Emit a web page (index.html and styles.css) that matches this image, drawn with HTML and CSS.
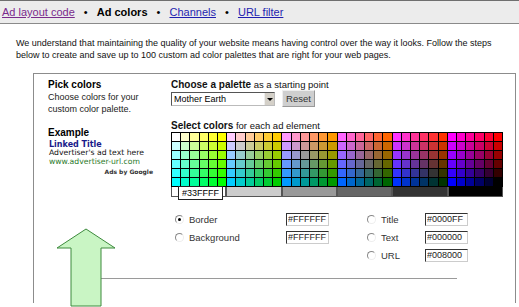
FILE: index.html
```html
<!DOCTYPE html>
<html lang="en">
<head>
    <meta charset="UTF-8">
    <title>Ad colors</title>
    <link rel="stylesheet" href="styles.css">
</head>
<body>
    <div class="tabs">
        <a class="visited" href="#">Ad layout code</a>
        <span class="dot">•</span>
        <b>Ad colors</b>
        <span class="dot">•</span>
        <a href="#">Channels</a>
        <span class="dot">•</span>
        <a href="#">URL filter</a>
    </div>

    <p class="intro">We understand that maintaining the quality of your website means having control over the way it looks. Follow the steps<br>below to create and save up to 100 custom ad color palettes that are right for your web pages.</p>

    <div class="panel">
        <div class="panel-row">
            <!-- Left column -->
            <div class="side">
                <h4>Pick colors</h4>
                <p>Choose colors for your<br>custom color palette.</p>
                <h4 class="example-head">Example</h4>
                <div class="sample">
                    <div class="ad-title">Linked Title</div>
                    <div class="ad-text">Advertiser's ad text here</div>
                    <div class="ad-url">www.advertiser-url.com</div>
                    <div class="ad-by">Ads by Google</div>
                </div>
            </div>

            <!-- Palette and picker -->
            <div class="main">
                <div class="label"><b>Choose a palette</b> as a starting point</div>
                <div class="palette-row">
                    <div class="select">Mother Earth<span class="select-btn"><span class="caret"></span></span></div>
                    <button class="reset">Reset</button>
                </div>

                <div class="label label-colors"><b>Select colors</b> for each ad element</div>
                <div class="picker">
                    <div class="grid" id="grid"></div>
                    <div class="grays" id="grays"></div>
                    <div class="tip">#33FFFF</div>
                </div>

                <div class="fields">
                    <div class="field-col">
                        <div class="field"><span class="radio checked"></span><span class="name">Border</span><input class="hex" type="text" value="#FFFFFF"></div>
                        <div class="field"><span class="radio"></span><span class="name">Background</span><input class="hex" type="text" value="#FFFFFF"></div>
                    </div>
                    <div class="field-col right">
                        <div class="field"><span class="radio"></span><span class="name">Title</span><input class="hex" type="text" value="#0000FF"></div>
                        <div class="field"><span class="radio"></span><span class="name">Text</span><input class="hex" type="text" value="#000000"></div>
                        <div class="field"><span class="radio"></span><span class="name">URL</span><input class="hex" type="text" value="#008000"></div>
                    </div>
                </div>
            </div>
        </div>
        <div class="rule"></div>
    </div>

    <!-- Annotation arrow -->
    <svg class="note-arrow" width="62" height="80" viewBox="0 0 62 80">
        <polygon points="30,1 1,20 15,20 15,78 45,78 45,20 59,20" fill="#c9f5c4" stroke="#3d8a3d" stroke-width="1"/>
    </svg>

    <script>
        // Build the web-safe color grid: rows vary red, blocks vary green, columns vary blue
        const steps = ['FF', 'CC', '99', '66', '33', '00'];
        const grid = document.getElementById('grid');
        steps.forEach(r => {
            steps.forEach(g => {
                steps.forEach(b => {
                    const cell = document.createElement('span');
                    cell.className = 'cell';
                    cell.style.background = '#' + r + g + b;
                    grid.appendChild(cell);
                });
            });
        });

        // Gray strip under the grid
        const grays = document.getElementById('grays');
        ['FFFFFF', 'CCCCCC', '999999', '666666', '333333', '000000'].forEach(c => {
            const seg = document.createElement('span');
            seg.className = 'gray';
            seg.style.background = '#' + c;
            grays.appendChild(seg);
        });
    </script>
</body>
</html>
```

FILE: styles.css
```css
body {
    margin: 0;
    font-family: 'Liberation Sans', Arial, sans-serif;
    color: #000;
    background: #fff;
    position: relative;
    height: 307px;
    overflow: hidden;
}
.tabs {
    height: 24px;
    line-height: 22px;
    background: #ececec;
    border-top: 1px solid #6f6f6f;
    border-bottom: 1px solid #8a8a8a;
    padding-left: 2px;
    font-size: 11px;
    box-sizing: border-box;
}
.tabs a {
    color: #1f1fb0;
}
.tabs a.visited {
    color: #7a2a8c;
}
.tabs b {
    font-size: 11px;
}
.dot {
    margin: 0 6px;
}
.intro {
    margin: 13px 0 0 16px;
    font-size: 9px;
    line-height: 12px;
    color: #111;
}
.panel {
    margin: 12px 0 0 33px;
    border: 1px solid #8c8c8c;
    border-bottom: none;
    width: 483px;
    height: 230px;
    padding-top: 5px;
    box-sizing: border-box;
}
.panel-row {
    display: flex;
}
.side {
    width: 123px;
    padding-left: 14px;
    font-size: 9px;
}
.side h4 {
    margin: 0;
    font-size: 10px;
    line-height: 12px;
}
.side p {
    margin: 0;
    line-height: 12px;
    color: #222;
}
.side .example-head {
    margin-top: 12px;
}
.sample {
    width: 104px;
    margin-top: 1px;
    padding-left: 1px;
    font-family: 'DejaVu Sans', Verdana, sans-serif;
}
.ad-title {
    color: #1a1a8a;
    font-weight: bold;
    font-size: 8px;
    line-height: 9px;
}
.ad-text {
    font-size: 7.7px;
    line-height: 8px;
    color: #111;
}
.ad-url {
    font-size: 7.7px;
    line-height: 9px;
    color: #2a7a2a;
}
.ad-by {
    text-align: right;
    font-size: 6px;
    font-weight: bold;
    line-height: 12px;
    color: #333;
}
.main {
    flex: 1;
    font-size: 9.5px;
}
.label {
    line-height: 12px;
    color: #111;
}
.label b {
    font-size: 10px;
}
.palette-row {
    display: flex;
    align-items: center;
    height: 17px;
    margin-top: -1px;
}
.select {
    width: 104px;
    height: 14px;
    box-sizing: border-box;
    border: 1px solid #555;
    border-right-color: #bbb;
    border-bottom-color: #bbb;
    font-size: 9px;
    line-height: 12px;
    padding-left: 2px;
    position: relative;
    background: #fff;
}
.select-btn {
    position: absolute;
    right: 0;
    top: 0;
    width: 10px;
    height: 12px;
    background: #d4d0c8;
    border-left: 1px solid #eee;
    box-sizing: border-box;
}
.caret {
    position: absolute;
    left: 2px;
    top: 5px;
    border: 3px solid transparent;
    border-top: 3px solid #000;
    border-bottom: none;
}
.reset {
    margin-left: 7px;
    width: 33px;
    height: 17px;
    padding: 0;
    font-family: 'Liberation Sans', Arial, sans-serif;
    font-size: 9.5px;
    color: #333;
    background: #cfcfcf;
    border: 1px solid #999;
    border-top-color: #eee;
    border-left-color: #eee;
}
.label-colors {
    margin-top: 13px;
}
.picker {
    position: relative;
    width: 332px;
}
.grid {
    display: grid;
    grid-template-columns: repeat(36, 1fr);
    grid-auto-rows: 8px;
    gap: 1px;
    padding: 1px;
    background: #000;
}
.grays {
    display: flex;
    height: 10px;
}
.gray {
    flex: 1;
    border: 1px solid #555;
    border-top: none;
}
.tip {
    position: absolute;
    left: 7px;
    top: 54px;
    height: 12px;
    line-height: 12px;
    padding: 0 3px;
    background: #fff;
    border: 1px solid #222;
    font-size: 9px;
}
.fields {
    display: flex;
    margin-top: 13px;
    padding-left: 4px;
}
.field-col {
    width: 192px;
}
.field-col.right {
    width: 110px;
}
.field {
    display: flex;
    align-items: center;
    height: 18px;
    font-size: 9.5px;
    color: #333;
}
.radio {
    width: 7px;
    height: 7px;
    border-radius: 50%;
    border: 1px solid #888;
    border-right-color: #eee;
    border-bottom-color: #eee;
    position: relative;
    margin-right: 5px;
}
.radio.checked::after {
    content: '';
    position: absolute;
    left: 2px;
    top: 2px;
    width: 3px;
    height: 3px;
    border-radius: 50%;
    background: #000;
}
.field-col .name {
    width: 97px;
}
.field-col.right .name {
    width: 44px;
}
.hex {
    width: 43px;
    height: 13px;
    box-sizing: border-box;
    padding: 0 0 0 1px;
    border: 1px solid #ccc;
    border-top-color: #333;
    border-left-color: #333;
    font-family: 'Liberation Sans', Arial, sans-serif;
    font-size: 9px;
    color: #222;
}
.rule {
    margin: 14px 0 0 66px;
    width: 357px;
    border-top: 1px solid #9a9a9a;
}
.note-arrow {
    position: absolute;
    left: 56px;
    top: 228px;
}
```
